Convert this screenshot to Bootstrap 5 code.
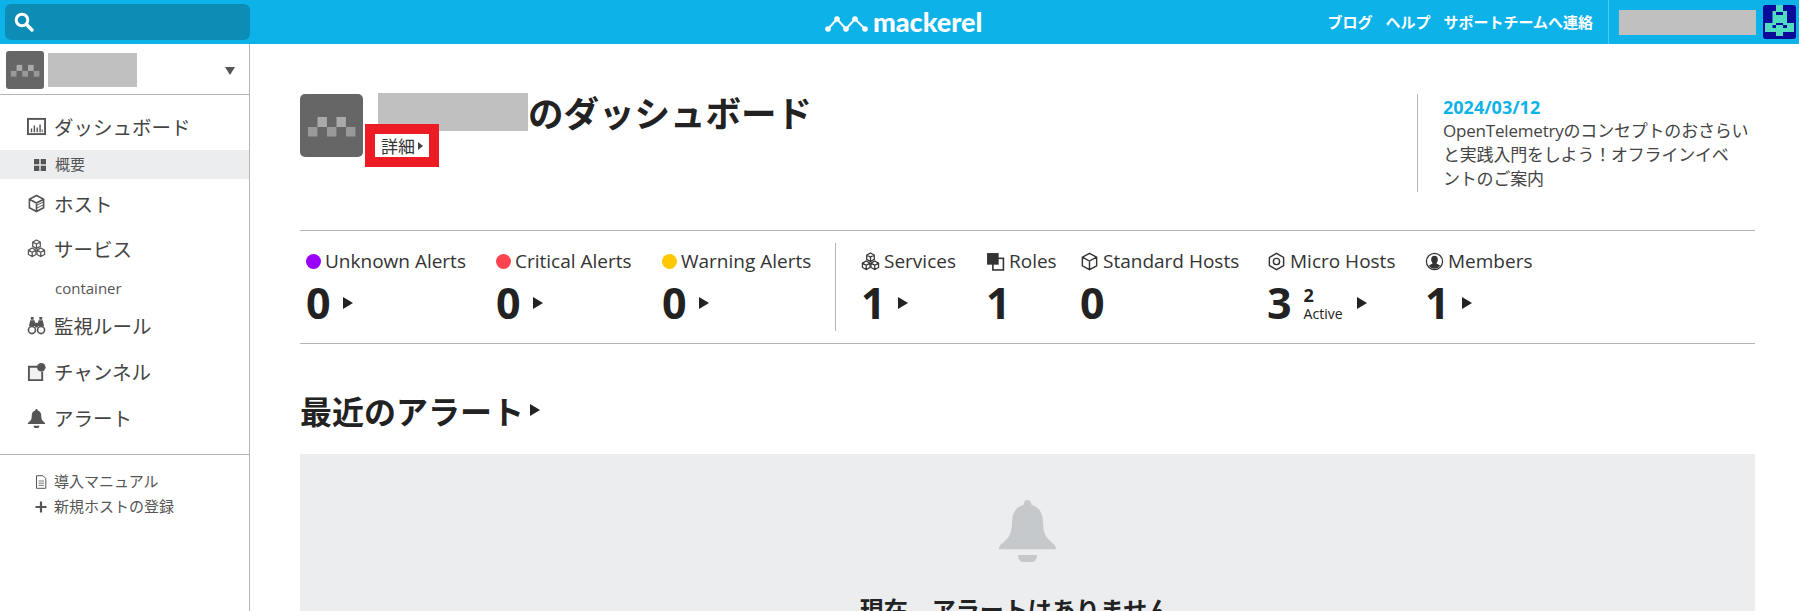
<!DOCTYPE html>
<html lang="ja">
<head>
    <meta charset="UTF-8">
    <meta name="viewport" content="width=device-width, initial-scale=1.0">
    <title>Mackerel</title>
    <link href="https://cdn.jsdelivr.net/npm/bootstrap@5.3.0/dist/css/bootstrap.min.css" rel="stylesheet">
    <style>
        html, body { height: 611px; overflow: hidden; }
        body { font-family: "Open Sans", "Noto Sans CJK JP", sans-serif; color: #222; }
        .topbar { height: 44px; background: #0db3e8; padding: 0; flex-wrap: nowrap; }
        .search-box { width: 245px; height: 36px; margin-left: 5px; background: #0c8db5; border-radius: 6px; padding-left: 9px; }
        .brand-logo { position: absolute; left: 825px; top: 8px; color: #fff; text-decoration: none; }
        .brand-name { font-family: "Lato", sans-serif; font-weight: 900; font-size: 27px; line-height: 28px; margin-left: 5px; }
        .top-links { margin-left: auto; gap: 13px; padding-right: 15px; height: 44px; border-right: 1px solid #4fc8ee; }
        .top-links a { color: #fff; font-weight: 700; font-size: 15px; text-decoration: none; font-family: "Noto Sans CJK JP", sans-serif; }
        .user-name { width: 137px; height: 25px; margin-left: 10px; background: #c0c0c0; }
        .user-icon { margin: 0 3px 0 7px; border-radius: 2px; }

        .page-wrap { height: 567px; overflow: hidden; }
        .side-col { width: 250px; flex: none; border-right: 1px solid #b4b4b4; }
        .org-row { height: 51px; padding: 7px 14px 0 6px; border-bottom: 1px solid #b4b4b4; }
        .org-icon { border-radius: 3px; }
        .org-name { width: 89px; height: 34px; background: #c0c0c0; margin: 2px 0 0 4px; }
        .org-caret { margin-left: auto; width: 0; height: 0; border-left: 5px solid transparent; border-right: 5px solid transparent; border-top: 8px solid #555; }
        .side-nav { padding: 10px 0 13px; border-bottom: 1px solid #b4b4b4; font-family: "Noto Sans CJK JP", sans-serif; }
        .side-link { height: 45px; padding: 0 0 2px 27px; gap: 8px; color: #444; font-size: 19.500px; text-decoration: none; }
        .side-link.is-tall { height: 46px; padding-bottom: 0; }
        .side-link svg { width: 19px; height: 19px; flex: none; color: #555; }
        .side-sub { height: 29px; padding-left: 34px; gap: 9px; font-size: 15px; color: #555; text-decoration: none; margin-bottom: 3px; }
        .side-sub.is-current { background: #ecedef; }
        .side-service { height: 32px; padding-left: 55px; font-size: 15px; color: #555; text-decoration: none; font-family: "Open Sans", sans-serif; }
        .side-extra { padding-top: 14px; font-family: "Noto Sans CJK JP", sans-serif; }
        .side-extra a { height: 25px; padding-left: 35px; gap: 7px; font-size: 15px; color: #555; text-decoration: none; }
        .side-extra svg { width: 12px; height: 14px; flex: none; color: #555; }

        .main-col { padding: 50px 44px 0 50px; min-width: 0; }
        .head-row { height: 98px; margin-bottom: 38px; }
        .head-icon { border-radius: 5px; flex: none; }
        .title-block { margin-left: 2px; }
        .title-text { font-size: 35.500px; font-weight: 700; line-height: 38px; height: 38px; margin: -1px 0 0 13px; font-family: "Noto Sans CJK JP", sans-serif; white-space: nowrap; }
        .title-mask { width: 150px; height: 38px; background: #c0c0c0; }
        .detail-link { width: 74px; height: 43px; margin-top: -7px; border: 10px solid #ed1c24; color: #333; font-size: 17px; background: #fff; text-decoration: none; padding-left: 6px; gap: 3px; position: relative; font-family: "Noto Sans CJK JP", sans-serif; }
        .tri-small { width: 0; height: 0; border-left: 5px solid #444; border-top: 4px solid transparent; border-bottom: 4px solid transparent; }
        .news-box { margin-left: auto; width: 338px; border-left: 1px solid #b4b4b4; padding-left: 25px; font-family: "Open Sans", "Noto Sans CJK JP", sans-serif; }
        .news-date { color: #0db3e8; font-weight: 700; font-size: 18px; line-height: 24px; margin-top: 1px; }
        .news-text { font-size: 17px; line-height: 24px; color: #444; margin: 0; white-space: nowrap; letter-spacing: -.2px; }

        .stats-row { height: 114px; border-top: 1px solid #b4b4b4; border-bottom: 1px solid #b4b4b4; padding-top: 12px; }
        .stats-one { width: 536px; height: 88px; padding-left: 6px; display: grid; grid-template-columns: 190px 166px 174px; border-right: 1px solid #b4b4b4; }
        .stats-two { padding-left: 25px; display: grid; grid-template-columns: 125px 94px 187px 158px 120px; }
        .stat-label { height: 26px; margin-top: 5px; gap: 4px; font-size: 19px; color: #333; white-space: nowrap; }
        .stat-label svg { width: 19px; height: 19px; flex: none; color: #333; }
        .dot-mark { width: 15px; height: 15px; border-radius: 50%; flex: none; }
        .dot-unknown { background: #9900ff; }
        .dot-critical { background: #ff4450; }
        .dot-warning { background: #ffc800; }
        .stat-num { height: 56px; margin-top: 1px; font-size: 43px; font-weight: 700; line-height: 52px; gap: 12px; color: #222; }
        .tri-big { width: 0; height: 0; border-left: 10px solid #222; border-top: 6px solid transparent; border-bottom: 6px solid transparent; }
        .active-box { font-weight: 400; font-size: 14px; line-height: 17px; margin: 0 2px 0 0; }
        .active-box b { display: block; font-size: 18px; line-height: 20px; font-weight: 700; }

        .section-title { font-size: 32px; font-weight: 700; line-height: 44px; margin: 44px 0 22px; gap: 6px; font-family: "Noto Sans CJK JP", sans-serif; }
        .empty-panel { height: 157px; overflow: hidden; background: #ecedef; padding-top: 46px; }
        .empty-bell { width: 57px; height: 62px; flex: none; color: #c6c9cc; }
        .empty-text { font-size: 24px; font-weight: 700; line-height: 34px; margin-top: 30px; flex: none; font-family: "Noto Sans CJK JP", sans-serif; }
    </style>
</head>
<body>
<svg class="d-none">
    <symbol id="ic-cube" viewBox="0 0 20 20"><path d="M10 1.500 17.500 5.500V14.500L10 18.500 2.500 14.500V5.500Z M2.500 5.500 10 9.500 17.500 5.500 M10 9.500V18.500" fill="none" stroke="currentColor" stroke-width="1.700"/><path d="M10 12 17 8.500M10 15 17 11.500" fill="none" stroke="currentColor" stroke-width="1"/></symbol>
    <symbol id="ic-cubes" viewBox="0 0 20 20"><g fill="none" stroke="currentColor" stroke-width="1.300"><path d="M10 1 14 3.200V7.800L10 10 6 7.800V3.200Z M6 3.200 10 5.400 14 3.200 M10 5.400V10"/><path d="M5.500 9.500 9.500 11.700V16.300L5.500 18.500 1.500 16.300V11.700Z M1.500 11.700 5.500 13.900 9.500 11.700 M5.500 13.900V18.500"/><path d="M14.500 9.500 18.500 11.700V16.300L14.500 18.500 10.500 16.300V11.700Z M10.500 11.700 14.500 13.900 18.500 11.700 M14.500 13.900V18.500"/></g></symbol>
    <symbol id="ic-bell" viewBox="0 0 57 62"><path fill="currentColor" d="M28.500 0c2.200 0 3.800 2 4 5.500 8 3 11 9.500 11.500 20 .5 11 1 16.500 8 23.500 3 3 5 4.500 5 9H0c0-4.500 2-6 5-9 7-7 7.500-12.500 8-23.500C13.500 15 16.500 8.500 24.500 5.500 24.700 2 26.300 0 28.500 0Z" transform="scale(1 .85)"/><path fill="currentColor" d="M19 55h19c0 4-2 7-5 7h-9c-3 0-5-3-5-7Z"/></symbol>
</svg>

<nav class="navbar topbar position-relative">
    <div class="search-box d-flex align-items-center">
        <svg width="20" height="20" viewBox="0 0 20 20"><circle cx="8" cy="8" r="5.800" fill="none" stroke="#fff" stroke-width="3"/><path d="M12.500 12.500 18 18" stroke="#fff" stroke-width="3.400" stroke-linecap="round"/></svg>
    </div>
    <a class="brand-logo d-flex align-items-center" href="#">
        <svg width="43" height="26" viewBox="0 0 43 26"><polyline points="3,20 12,10 21,20 30,10 40,20" fill="none" stroke="#fff" stroke-width="2"/><g fill="#fff"><circle cx="3" cy="20" r="2.800"/><circle cx="12" cy="10" r="2.800"/><circle cx="21" cy="20" r="2.800"/><circle cx="30" cy="10" r="2.800"/><circle cx="40" cy="20" r="2.800"/></g></svg>
        <span class="brand-name">mackerel</span>
    </a>
    <div class="top-links d-flex align-items-center">
        <a href="#">ブログ</a>
        <a href="#">ヘルプ</a>
        <a href="#">サポートチームへ連絡</a>
    </div>
    <div class="user-name"></div>
    <svg class="user-icon" width="33" height="34" viewBox="0 0 33 34">
        <rect width="33" height="34" rx="2" fill="#0a0a9a"/>
        <g fill="#4fdcc0"><rect x="13" y="0" width="7" height="6"/><rect x="9.500" y="6" width="14.500" height="12"/><rect x="2" y="18" width="29" height="9"/><rect x="13" y="27" width="7" height="4"/></g>
        <g fill="#0a0a9a"><rect x="13" y="7" width="7" height="3"/><rect x="9.500" y="20" width="3.500" height="3"/><rect x="20" y="20" width="4" height="3"/><rect x="13" y="18" width="7" height="2"/></g>
    </svg>
</nav>

<div class="page-wrap d-flex">
    <aside class="side-col">
        <div class="org-row d-flex align-items-start">
            <svg class="org-icon" width="38" height="38" viewBox="0 0 63 63"><rect width="63" height="63" fill="#666"/><g fill="#999"><rect x="8" y="33" width="9.400" height="9.500"/><rect x="27" y="33" width="9.400" height="9.500"/><rect x="46" y="33" width="9.400" height="9.500"/></g><g fill="#aaa"><rect x="17.500" y="23" width="9.400" height="10"/><rect x="36.500" y="23" width="9.400" height="10"/></g></svg>
            <div class="org-name"></div>
            <div class="org-caret mt-3"></div>
        </div>
        <div class="side-nav nav flex-column">
            <a class="side-link d-flex align-items-center" href="#">
                <svg viewBox="0 0 20 20"><rect x="1" y="2" width="18" height="16" fill="none" stroke="currentColor" stroke-width="2"/><path d="M4 16v-4h1.500v4zM7 16v-7h1.500v7zM10 16v-5h1.500v5zM13 16v-8h1.500v8zM15.500 16v-3h1v3z" fill="currentColor"/></svg>
                ダッシュボード
            </a>
            <a class="side-sub is-current d-flex align-items-center" href="#">
                <svg width="12" height="12" viewBox="0 0 12 12"><g fill="#555"><rect width="5.300" height="5.300"/><rect x="6.700" width="5.300" height="5.300"/><rect y="6.700" width="5.300" height="5.300"/><rect x="6.700" y="6.700" width="5.300" height="5.300"/></g></svg>
                <span>概要</span>
            </a>
            <a class="side-link d-flex align-items-center" href="#"><svg><use href="#ic-cube"/></svg>ホスト</a>
            <a class="side-link d-flex align-items-center" href="#"><svg><use href="#ic-cubes"/></svg>サービス</a>
            <a class="side-service d-flex align-items-center" href="#">container</a>
            <a class="side-link d-flex align-items-center" href="#">
                <svg viewBox="0 0 20 20"><g fill="currentColor"><path d="M3.500 4.500h4.500l1 6H2zM12 4.500h4.500l1.500 6H11zM8.500 7h3v5h-3zM4 1h3v3H4zM13 1h3v3h-3z"/></g><g fill="#fff" stroke="currentColor" stroke-width="1.700"><circle cx="5.200" cy="14.800" r="3.700"/><circle cx="14.800" cy="14.800" r="3.700"/></g></svg>
                監視ルール
            </a>
            <a class="side-link is-tall d-flex align-items-center" href="#">
                <svg viewBox="0 0 20 20"><path d="M12 4H2v14h14V9" fill="#f2f2f2" stroke="currentColor" stroke-width="2"/><circle cx="15" cy="4.500" r="4.500" fill="currentColor"/></svg>
                チャンネル
            </a>
            <a class="side-link is-tall d-flex align-items-center" href="#"><svg><use href="#ic-bell"/></svg>アラート</a>
        </div>
        <div class="side-extra d-flex flex-column">
            <a class="d-flex align-items-center" href="#">
                <svg viewBox="0 0 12 14"><path d="M1.500 .700H8L10.800 3.500V13.300H1.500Z" fill="none" stroke="currentColor" stroke-width="1"/><path d="M3.500 6h5.500M3.500 8.200h5.500M3.500 10.400h5.500" stroke="currentColor" stroke-width=".8"/></svg>
                導入マニュアル
            </a>
            <a class="d-flex align-items-center" href="#">
                <svg viewBox="0 0 12 14"><path d="M6 1.500V12.500M.5 7H11.500" stroke="currentColor" stroke-width="2.200"/></svg>
                新規ホストの登録
            </a>
        </div>
    </aside>

    <main class="main-col flex-grow-1">
        <div class="head-row d-flex align-items-start">
            <svg class="head-icon" width="63" height="63" viewBox="0 0 63 63"><rect width="63" height="63" fill="#666"/><g fill="#999"><rect x="8" y="33" width="9.400" height="9.500"/><rect x="27" y="33" width="9.400" height="9.500"/><rect x="46" y="33" width="9.400" height="9.500"/></g><g fill="#aaa"><rect x="17.500" y="23" width="9.400" height="10"/><rect x="36.500" y="23" width="9.400" height="10"/></g></svg>
            <div class="title-block">
                <div class="title-text d-flex"><span class="title-mask"></span><span>のダッシュボード</span></div>
                <a class="detail-link d-flex align-items-center" href="#">詳細<span class="tri-small"></span></a>
            </div>
            <div class="news-box align-self-stretch">
                <div class="news-date">2024/03/12</div>
                <p class="news-text">OpenTelemetryのコンセプトのおさらい<br>と実践入門をしよう！オフラインイベ<br>ントのご案内</p>
            </div>
        </div>

        <div class="stats-row d-flex">
            <div class="stats-one">
                <div>
                    <div class="stat-label d-flex align-items-center"><span class="dot-mark dot-unknown"></span>Unknown Alerts</div>
                    <div class="stat-num d-flex align-items-center">0<span class="tri-big"></span></div>
                </div>
                <div>
                    <div class="stat-label d-flex align-items-center"><span class="dot-mark dot-critical"></span>Critical Alerts</div>
                    <div class="stat-num d-flex align-items-center">0<span class="tri-big"></span></div>
                </div>
                <div>
                    <div class="stat-label d-flex align-items-center"><span class="dot-mark dot-warning"></span>Warning Alerts</div>
                    <div class="stat-num d-flex align-items-center">0<span class="tri-big"></span></div>
                </div>
            </div>
            <div class="stats-two">
                <div>
                    <div class="stat-label d-flex align-items-center"><svg><use href="#ic-cubes"/></svg>Services</div>
                    <div class="stat-num d-flex align-items-center">1<span class="tri-big"></span></div>
                </div>
                <div>
                    <div class="stat-label d-flex align-items-center">
                        <svg viewBox="0 0 18 18"><rect x="6.500" y="6" width="10" height="11" fill="none" stroke="currentColor" stroke-width="1.500"/><rect x="1" y="1" width="11" height="11" fill="currentColor"/></svg>
                        Roles
                    </div>
                    <div class="stat-num d-flex align-items-center">1</div>
                </div>
                <div>
                    <div class="stat-label d-flex align-items-center"><svg viewBox="0 0 20 20"><path d="M10 1.500 17.500 5.500V14.500L10 18.500 2.500 14.500V5.500Z M2.500 5.500 10 9.500 17.500 5.500 M10 9.500V18.500" fill="none" stroke="currentColor" stroke-width="1.500"/></svg>Standard Hosts</div>
                    <div class="stat-num d-flex align-items-center">0</div>
                </div>
                <div>
                    <div class="stat-label d-flex align-items-center">
                        <svg viewBox="0 0 20 20"><path d="M10 1.500 17.500 5.700V14.300L10 18.500 2.500 14.300V5.700Z" fill="none" stroke="currentColor" stroke-width="1.500"/><circle cx="10" cy="10" r="3.300" fill="none" stroke="currentColor" stroke-width="1.500"/></svg>
                        Micro Hosts
                    </div>
                    <div class="stat-num d-flex align-items-center">3<span class="active-box"><b>2</b>Active</span><span class="tri-big"></span></div>
                </div>
                <div>
                    <div class="stat-label d-flex align-items-center">
                        <svg viewBox="0 0 20 20"><circle cx="10" cy="10" r="8.500" fill="none" stroke="currentColor" stroke-width="1.300"/><path d="M10 4c2.300 0 3.500 1.700 3.500 4 0 2-1 3.200-1.500 4 1 .8 3 1.200 4 2.500A7.500 7.500 0 0 1 4 14.500C5 13.200 7 12.800 8 12c-.5-.8-1.500-2-1.500-4 0-2.300 1.200-4 3.500-4Z" fill="currentColor"/></svg>
                        Members
                    </div>
                    <div class="stat-num d-flex align-items-center">1<span class="tri-big"></span></div>
                </div>
            </div>
        </div>

        <h2 class="section-title d-flex align-items-center">最近のアラート<span class="tri-big"></span></h2>
        <div class="empty-panel d-flex flex-column align-items-center">
            <svg class="empty-bell"><use href="#ic-bell"/></svg>
            <div class="empty-text">現在、アラートはありません。</div>
        </div>
    </main>
</div>
<script src="https://cdn.jsdelivr.net/npm/bootstrap@5.3.0/dist/js/bootstrap.bundle.min.js"></script>
</body>
</html>
